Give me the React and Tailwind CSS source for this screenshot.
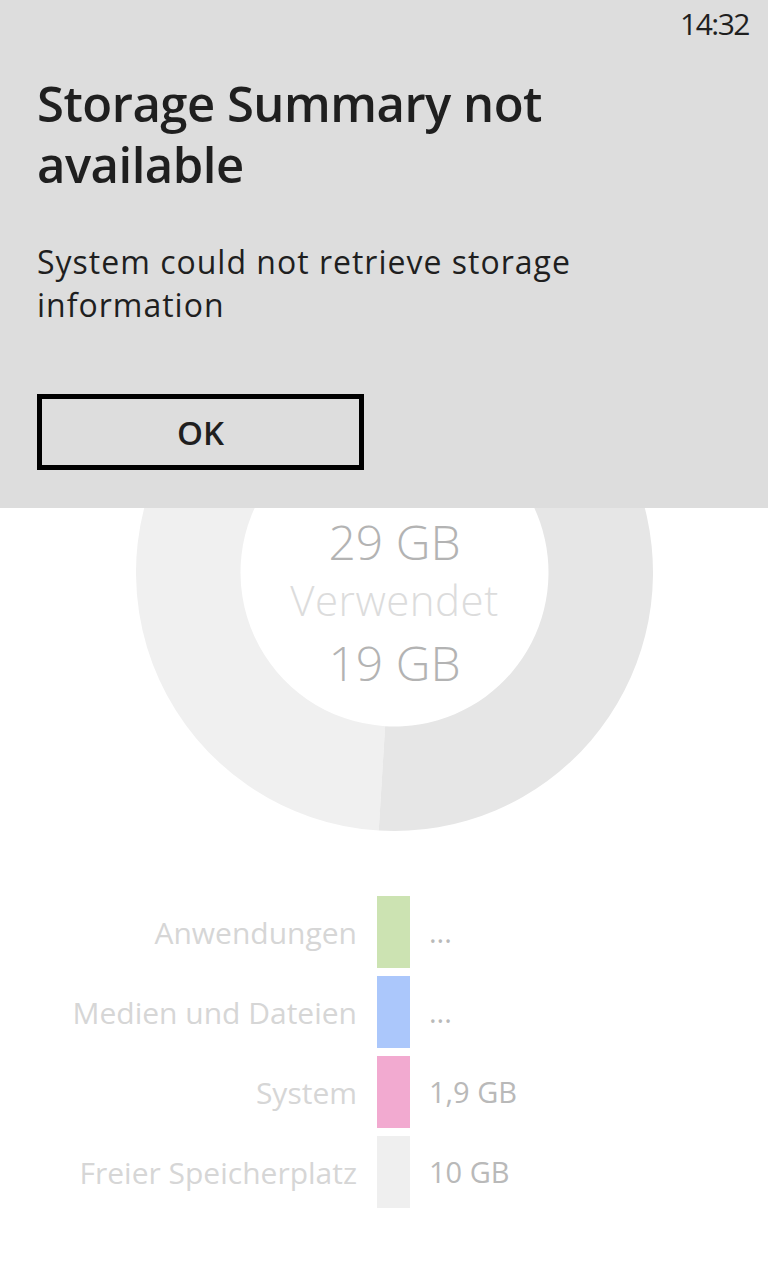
const segments = [
  { from: 183.5, to: 307.5, color: "#f0f0f0" },
  { from: 307.5, to: 331.5, color: "#f2aad0" },
  { from: 331.5, to: 543.5, color: "#e6e6e6" },
];

const legend = [
  { label: "Anwendungen", color: "bg-[#cce3b2]", value: "..." },
  { label: "Medien und Dateien", color: "bg-[#abc7fb]", value: "..." },
  { label: "System", color: "bg-[#f2aad0]", value: "1,9 GB" },
  { label: "Freier Speicherplatz", color: "bg-[#efefef]", value: "10 GB" },
];

function ringPath(from, to, R, r, c) {
  const pt = (deg, rad) => {
    const a = (deg * Math.PI) / 180;
    return `${c + rad * Math.sin(a)} ${c - rad * Math.cos(a)}`;
  };
  const large = to - from > 180 ? 1 : 0;
  return `M ${pt(from, R)} A ${R} ${R} 0 ${large} 1 ${pt(to, R)} L ${pt(to, r)} A ${r} ${r} 0 ${large} 0 ${pt(from, r)} Z`;
}

function Donut() {
  return (
    <div className="relative ml-[136px] w-[517px] h-[517px]">
      <svg width="517" height="517" viewBox="0 0 517 517">
        {segments.map((s) => (
          <path key={s.from} d={ringPath(s.from, s.to, 258.5, 154, 258.5)} fill={s.color} />
        ))}
      </svg>
      {/* center labels */}
      <div className="absolute inset-x-0 top-[200px] flex flex-col items-center font-light">
        <span className="text-[48px] leading-[56px] text-[#b3b3b3]">29 GB</span>
        <span className="text-[42px] leading-[59px] tracking-[0.5px] text-[#dcdcdc]">Verwendet</span>
        <span className="text-[48px] leading-[67px] text-[#b3b3b3]">19 GB</span>
      </div>
    </div>
  );
}

function Legend() {
  return (
    <ul className="mt-[65px]">
      {legend.map((row) => (
        <li key={row.label} className="flex items-center h-[72px] mb-[8px]">
          <span className="w-[357px] text-right text-[30px] text-[#d6d6d6] whitespace-nowrap">
            {row.label}
          </span>
          <span className={`ml-[20px] w-[33px] h-[72px] ${row.color}`} />
          <span className="ml-[19px] text-[29px] text-[#b9b9b9]">{row.value}</span>
        </li>
      ))}
    </ul>
  );
}

function MessageBox() {
  return (
    <div className="absolute inset-x-0 top-0 h-[508px] bg-[#dddddd] text-[#1f1f1f]">
      <div className="flex justify-end pr-[19px] pt-[6px] text-[30px] leading-[36px] tracking-[-1.5px]">
        14:32
      </div>
      <div className="px-[37px]">
        <h1 className="mt-[31px] max-w-[620px] text-[49px] leading-[61px] tracking-[-0.5px] font-semibold">
          Storage Summary not available
        </h1>
        <p className="mt-[45px] max-w-[620px] text-[32px] leading-[43px] tracking-[1px]">
          System could not retrieve storage information
        </p>
        <button
          type="button"
          className="mt-[68px] w-[327px] h-[76px] border-[5px] border-black flex items-center justify-center text-[33px] font-semibold leading-none"
        >
          OK
        </button>
      </div>
    </div>
  );
}

export default function App() {
  return (
    <div className="relative h-[1280px] bg-white overflow-hidden font-['Open_Sans','Noto_Sans',sans-serif]">
      <main className="pt-[314px]">
        <Donut />
        <Legend />
      </main>
      <MessageBox />
    </div>
  );
}
